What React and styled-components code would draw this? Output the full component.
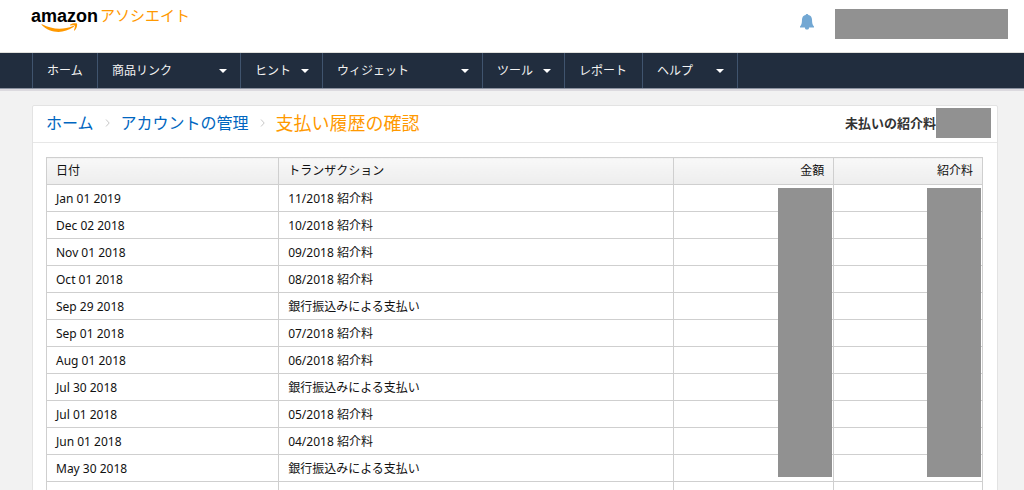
import styled, { createGlobalStyle } from 'styled-components';

const GlobalStyle = createGlobalStyle`
	* {
		box-sizing: border-box;
	}

	body {
		margin: 0;
		background-color: #f2f2f2;
		color: #111;
		font-family: 'Noto Sans', 'Noto Sans CJK JP', sans-serif;
		font-size: 12px;
		line-height: 18px;
	}

	#root {
		height: 100vh;
		overflow: hidden;
	}
`;

const Header = styled.header`
	display: flex;
	align-items: flex-start;
	justify-content: space-between;
	height: 53px;
	padding: 5px 16px 0 31px;
	background-color: #fff;
	border-bottom: 1px solid #e0e0dc;
`;

const Logo = styled.a`
	display: flex;
	align-items: flex-start;
	gap: 2px;
	text-decoration: none;
`;

const Brand = styled.span`
	display: flex;
	flex-direction: column;
	color: #000;
	font-family: 'Liberation Sans', sans-serif;
	font-weight: 700;
	font-size: 18px;
	line-height: 22px;

	svg {
		margin-top: -4px;
		margin-left: 10px;
	}
`;

const Program = styled.span`
	color: #ff9900;
	font-family: 'Noto Sans CJK JP', sans-serif;
	font-weight: 400;
	font-size: 15px;
	line-height: 20px;
`;

const Account = styled.div`
	display: flex;
	align-items: flex-start;
	gap: 21px;
	padding-top: 4px;
`;

const BellButton = styled.button`
	display: flex;
	padding: 5px 0 0;
	border: 0;
	background: none;
	color: #72a7d3;
`;

const Mask = styled.div`
	width: ${({ $width }) => $width}px;
	height: 30px;
	background-color: #919191;
`;

const Nav = styled.nav`
	height: 38px;
	padding-left: 32px;
	background-color: #212d3e;
	border-bottom: 2px solid #dcdadf;
	box-shadow: inset 0 -1px 0 #8b92a0;
`;

const Menu = styled.ul`
	display: flex;
	height: 35px;
	margin: 0;
	padding: 0;
	list-style: none;
`;

const MenuItem = styled.li`
	width: ${({ $width }) => $width}px;
	border-left: 1px solid #40546e;

	&:last-child {
		border-right: 1px solid #40546e;
	}
`;

const MenuLink = styled.a`
	display: flex;
	align-items: center;
	justify-content: space-between;
	height: 100%;
	padding: 0 13px 0 14px;
	color: #f3f3f3;
	font-size: 12px;
	white-space: nowrap;
	text-decoration: none;
`;

const Caret = styled.span`
	border: 4px solid transparent;
	border-top-color: #fff;
	border-bottom: 0;
`;

const Card = styled.main`
	margin: 14px 26px 0 32px;
	background-color: #fff;
	border: 1px solid #e3e3e3;
	border-radius: 2px;
`;

const CardHeader = styled.div`
	display: flex;
	align-items: center;
	justify-content: space-between;
	height: 37px;
	padding: 0 6px 3px 13px;
	border-bottom: 1px solid #e7e7e7;
`;

const Breadcrumb = styled.nav`
	display: flex;
	align-items: center;
	gap: 11px;
	font-size: 16px;
	line-height: 24px;

	a {
		color: #0066c0;
		text-decoration: none;
	}
`;

const Current = styled.h1`
	margin: 0;
	color: #ff9900;
	font-weight: 400;
	font-size: 18px;
	line-height: 24px;
`;

const Unpaid = styled.div`
	display: flex;
	align-items: center;
	color: #333;
	font-weight: 700;
	font-size: 13px;
`;

const TableWrap = styled.div`
	position: relative;
	margin: 14px 14px 20px 13px;
`;

const Table = styled.table`
	width: 100%;
	table-layout: fixed;
	border-collapse: collapse;
	border: 1px solid #cfcfcf;

	th,
	td {
		height: 27px;
		padding: 0 9px;
		border: 1px solid #cfcfcf;
		text-align: left;
	}

	th {
		background: linear-gradient(#f8f8f8, #ededed);
		font-weight: 400;
	}

	td {
		padding-top: 1px;
	}

	th:nth-child(n + 3),
	td:nth-child(n + 3) {
		text-align: right;
	}
`;

const Col = styled.col`
	width: ${({ $width }) => $width};
`;

const ColumnMask = styled.div`
	position: absolute;
	top: 31px;
	right: ${({ $right }) => $right}px;
	bottom: 32px;
	width: 54px;
	background-color: #919191;
`;

const menu = [
	{ label: 'ホーム', width: 65 },
	{ label: '商品リンク', width: 143, dropdown: true },
	{ label: 'ヒント', width: 82, dropdown: true },
	{ label: 'ウィジェット', width: 160, dropdown: true },
	{ label: 'ツール', width: 82, dropdown: true },
	{ label: 'レポート', width: 78 },
	{ label: 'ヘルプ', width: 96, dropdown: true },
];

const payments = [
	['Jan 01 2019', '11/2018 紹介料'],
	['Dec 02 2018', '10/2018 紹介料'],
	['Nov 01 2018', '09/2018 紹介料'],
	['Oct 01 2018', '08/2018 紹介料'],
	['Sep 29 2018', '銀行振込みによる支払い'],
	['Sep 01 2018', '07/2018 紹介料'],
	['Aug 01 2018', '06/2018 紹介料'],
	['Jul 30 2018', '銀行振込みによる支払い'],
	['Jul 01 2018', '05/2018 紹介料'],
	['Jun 01 2018', '04/2018 紹介料'],
	['May 30 2018', '銀行振込みによる支払い'],
	['', ''],
];

const Smile = () => (
	<svg width="38" height="11" viewBox="0 0 38 11" aria-hidden="true">
		<path d="M.5 1.800C.2 1.300.6.900 1.100 1.300 11.500 6.800 22.500 6.900 32 3c.8-.3 1.400.5.600 1.100C22.500 11 9.500 10.800 .5 1.800Z" fill="#ff9900" />
		<path d="M29 1.700C31.500 0 35.300-.1 35.900.6c.7.9-.1 5-2.300 6.900-.4.300-.8.100-.6-.4.600-1.500 1.200-3.900.7-4.400-.5-.6-2.700-.4-4.100-.2-.7.100-.9-.4-.6-.8Z" fill="#ff9900" />
	</svg>
);

const Bell = () => (
	<svg width="14" height="16" viewBox="0 0 14 16" fill="currentColor" aria-hidden="true">
		<path d="M7 0c.7 0 1.200.4 1.300 1C10.800 1.500 11.900 3.300 12 5.500c.1 3.600.4 5.600 2 7v.9H9.100C9 15 8.200 15.600 7 15.600S5 15 4.900 13.400H0v-.9c1.600-1.400 1.900-3.400 2-7C2.100 3.300 3.200 1.500 5.700 1 5.800.4 6.300 0 7 0Z" />
	</svg>
);

const Chevron = () => (
	<svg width="5" height="8" viewBox="0 0 5 8" fill="none" stroke="#c8c8c8" aria-hidden="true">
		<path d="M1 .5 4.200 4 1 7.500" />
	</svg>
);

const App = () => {
	return (
		<>
			<GlobalStyle />
			<Header>
				<Logo href="#">
					<Brand>
						amazon
						<Smile />
					</Brand>
					<Program>アソシエイト</Program>
				</Logo>
				<Account>
					<BellButton type="button" aria-label="通知">
						<Bell />
					</BellButton>
					<Mask $width={173} />
				</Account>
			</Header>

			<Nav>
				<Menu>
					{menu.map(({ label, width, dropdown }) => (
						<MenuItem key={label} $width={width}>
							<MenuLink href="#">
								{label}
								{dropdown && <Caret />}
							</MenuLink>
						</MenuItem>
					))}
				</Menu>
			</Nav>

			<Card>
				<CardHeader>
					<Breadcrumb>
						<a href="#">ホーム</a>
						<Chevron />
						<a href="#">アカウントの管理</a>
						<Chevron />
						<Current>支払い履歴の確認</Current>
					</Breadcrumb>
					<Unpaid>
						未払いの紹介料
						<Mask $width={55} />
					</Unpaid>
				</CardHeader>

				<TableWrap>
					<Table>
						<colgroup>
							<Col $width="24.8%" />
							<Col $width="42.2%" />
							<Col $width="17.1%" />
							<Col $width="15.9%" />
						</colgroup>
						<thead>
							<tr>
								<th scope="col">日付</th>
								<th scope="col">トランザクション</th>
								<th scope="col">金額</th>
								<th scope="col">紹介料</th>
							</tr>
						</thead>
						<tbody>
							{payments.map(([date, transaction]) => (
								<tr key={date}>
									<td>{date}</td>
									<td>{transaction}</td>
									<td></td>
									<td></td>
								</tr>
							))}
						</tbody>
					</Table>
					<ColumnMask $right={151} />
					<ColumnMask $right={2} />
				</TableWrap>
			</Card>
		</>
	);
};

export default App;
